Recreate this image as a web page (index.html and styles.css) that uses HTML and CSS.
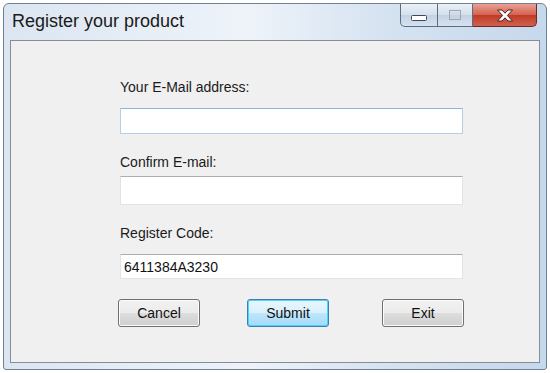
FILE: index.html
```html
<!DOCTYPE html>
<html lang="en">
<head>
  <meta charset="UTF-8">
  <meta name="viewport" content="width=device-width, initial-scale=1.0">
  <title>Register your product</title>
  <link rel="stylesheet" href="styles.css">
</head>
<body>
  <div class="window">
    <div class="titlebar">
      <span class="title">Register your product</span>
      <div class="caption">
        <span class="cap-btn min">
          <svg width="16" height="6" viewBox="0 0 16 6"><rect x="0.5" y="0.5" width="15" height="5" rx="1" fill="#fff" stroke="#3b4a5c"/></svg>
        </span>
        <span class="cap-btn max">
          <svg width="12" height="10" viewBox="0 0 12 10"><rect x="0.5" y="0.5" width="11" height="9" fill="none" stroke="#9aa6b4"/><rect x="2.5" y="3" width="7" height="4.5" fill="none" stroke="#c9d2dc"/></svg>
        </span>
        <span class="cap-btn close">
          <svg width="18" height="13" viewBox="0 0 18 13"><path d="M1.5 1 H6 L9 4.2 L12 1 H16.5 L11.4 6.5 L16.5 12 H12 L9 8.8 L6 12 H1.5 L6.6 6.5 Z" fill="#fff" stroke="#4a2320" stroke-width="1"/></svg>
        </span>
      </div>
    </div>

    <div class="client">
      <form class="form">
        <label class="label">Your E-Mail address:</label>
        <input class="text focus" type="text">
        <label class="label tight">Confirm E-mail:</label>
        <input class="text tall" type="text">
        <label class="label">Register Code:</label>
        <input class="text short" type="text" value="6411384A3230">

        <div class="buttons">
          <button class="btn" type="button">Cancel</button>
          <button class="btn default" type="button">Submit</button>
          <button class="btn exit" type="button">Exit</button>
        </div>
      </form>
    </div>
  </div>
</body>
</html>
```

FILE: styles.css
```css
body { margin: 0; background: #fff; font-family: "Liberation Sans", Arial, sans-serif; }

.window {
  margin: 3px; width: 544px; height: 367px; box-sizing: border-box;
  display: flex; flex-direction: column; padding: 0 6px 6px;
  border: 1px solid #6f8094; border-radius: 6px 6px 3px 3px;
  background: linear-gradient(to right, #dbe6f2, #eef3f9 45%, #d6e3f1 70%, #c6d8ec);
}

.titlebar { height: 36px; display: flex; justify-content: space-between; align-items: flex-start; }
.title { padding: 6px 0 0 2px; font-size: 18px; line-height: 22px; color: #1a1a1a; }

.caption { display: flex; margin-right: 3px; height: 23px; }
.cap-btn {
  display: flex; align-items: center; justify-content: center; box-sizing: border-box;
  height: 23px; border: 1px solid #5d6c7e; border-top: none;
  background: linear-gradient(#e9f0f8, #d5e0ec 50%, #c3d2e3 51%, #d5e2f0);
}
.cap-btn.min { width: 38px; border-radius: 0 0 0 5px; padding-top: 6px; }
.cap-btn.max { width: 35px; border-left: none; }
.cap-btn.close {
  width: 64px; border-left: none; border-radius: 0 0 5px 0; border-color: #6a2a22;
  background: linear-gradient(#e8a093, #d4614f 50%, #c13a28 51%, #d0624d);
}

.client { flex: 1; background: #f0f0f0; border: 1px solid #878d95; }

.form { display: flex; flex-direction: column; width: 343px; margin-left: 109px; padding-top: 38px; }

.label { font-size: 14px; line-height: 17px; color: #1a1a1a; margin-bottom: 12px; }
.label.tight { margin-bottom: 5px; }

.text {
  box-sizing: border-box; width: 343px; height: 26px; margin: 0 0 20px; padding: 0 3px;
  font: 14px "Liberation Sans", Arial, sans-serif; color: #111; background: #fff;
  border: 1px solid #e2e3ea; border-top-color: #abadb3; outline: none;
}
.text.focus { border-color: #b5cfe7; border-top-color: #8fb4d8; }
.text.tall { height: 29px; }
.text.short { height: 25px; margin-bottom: 20px; }

.buttons { display: flex; margin-left: -2px; margin-right: -1px; }
.btn {
  width: 82px; height: 28px; border: 1px solid #707070; border-radius: 3px;
  font: 14px "Liberation Sans", Arial, sans-serif; color: #111;
  background: linear-gradient(#f2f2f2, #ebebeb 50%, #dddddd 51%, #cfcfcf);
  box-shadow: inset 0 0 0 1px #fbfbfb;
}
.btn.default {
  margin-left: 47px; border-color: #3c7fb1;
  background: linear-gradient(#eaf6fd, #d9f0fc 50%, #bee6fd 51%, #a7d9f5);
  box-shadow: inset 0 0 0 1px #48d6fb;
}
.btn.exit { margin-left: auto; }
```
